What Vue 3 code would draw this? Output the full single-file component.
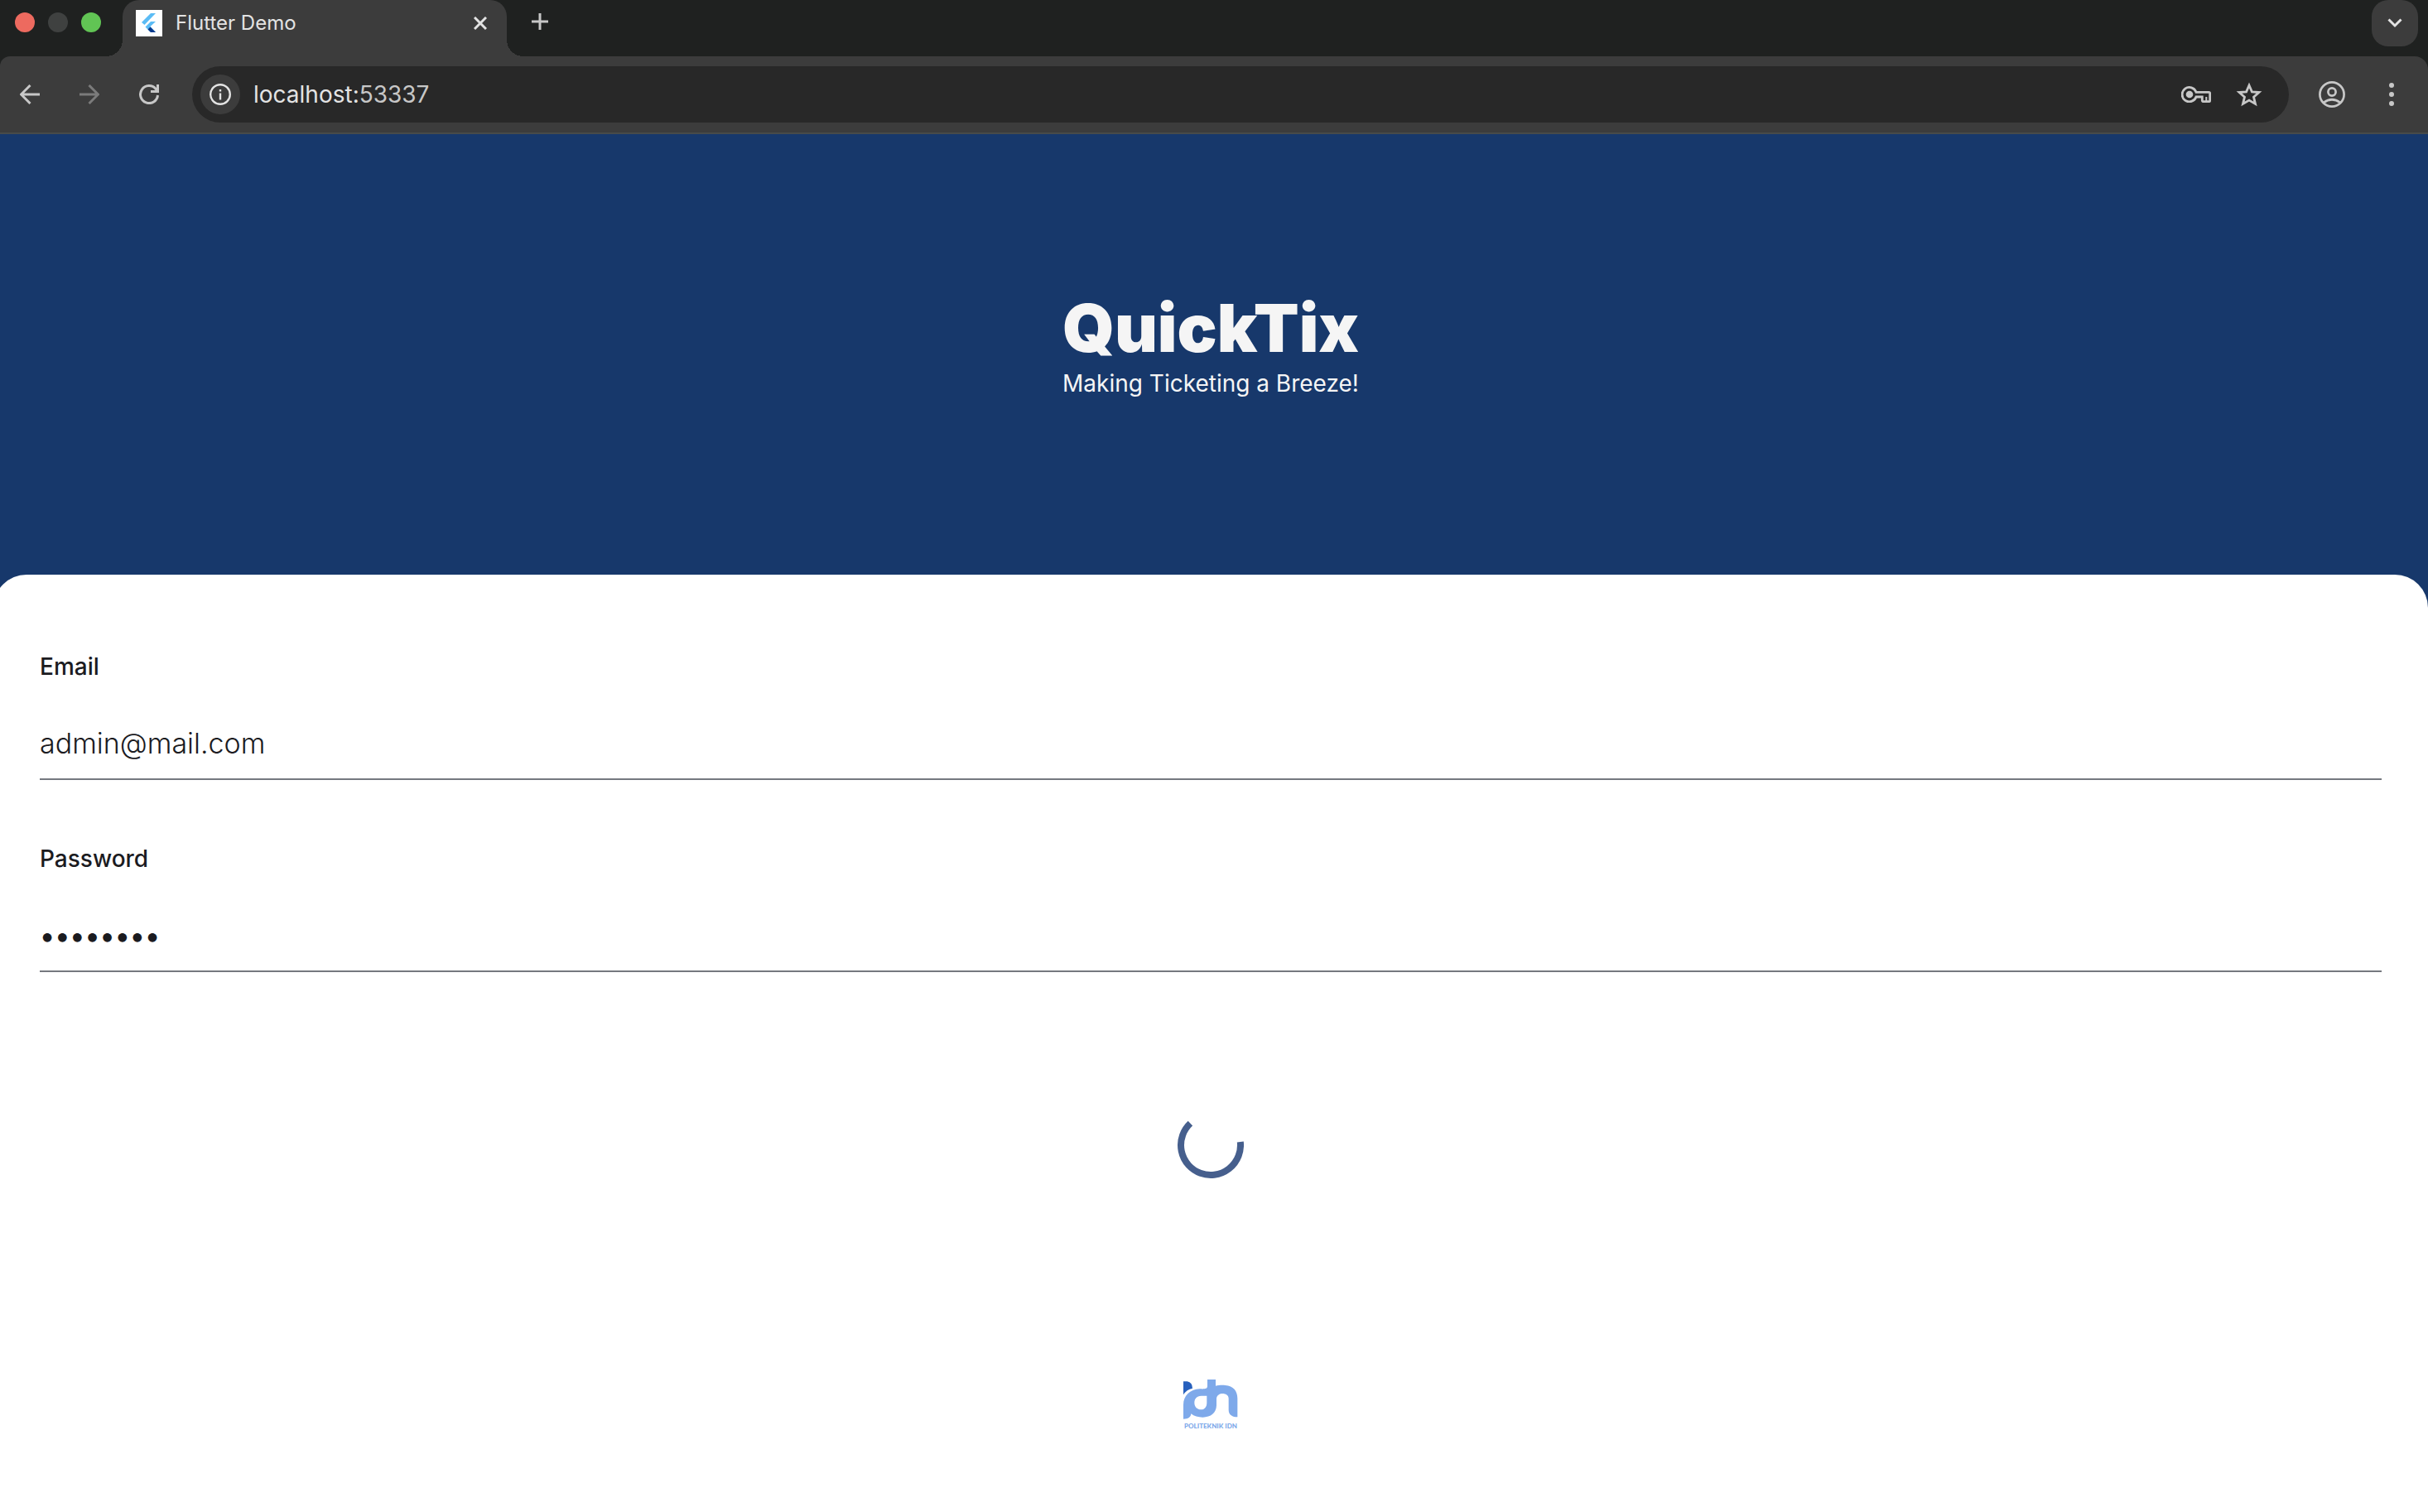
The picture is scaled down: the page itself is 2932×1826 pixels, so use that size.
<script setup>
import { ref } from 'vue'

const email = ref('admin@mail.com')
const password = ref('password')
</script>

<template>
  <div class="browser">
    <header class="chrome">
      <div class="tabstrip">
        <div class="lights">
          <button class="light close" aria-label="Close window"></button>
          <button class="light minimise" aria-label="Minimise window"></button>
          <button class="light zoom" aria-label="Zoom window"></button>
        </div>
        <div class="tab">
          <svg class="favicon" viewBox="0 0 32 32" aria-hidden="true">
            <rect width="32" height="32" fill="#fff" />
            <path d="M18 4H24L10.500 18L7 15Z" fill="#5bbcf5" />
            <path d="M18 14H24L17.500 20L24 27H18L11.500 20.500Z" fill="#5bbcf5" />
            <path d="M14.500 23.500L17.500 20.500L24 27H18Z" fill="#0a3a8c" />
          </svg>
          <span class="tab-title">Flutter Demo</span>
          <button class="icon-button tab-close" aria-label="Close tab">
            <svg width="16" height="16" viewBox="0 0 16 16"><path d="M1 1L15 15M15 1L1 15" stroke="#e3e3e3" stroke-width="3" /></svg>
          </button>
        </div>
        <button class="icon-button new-tab" aria-label="New tab">
          <svg width="20" height="20" viewBox="0 0 20 20"><path d="M10 0V20M0 10H20" stroke="#c7c7c7" stroke-width="3" /></svg>
        </button>
        <button class="icon-button tab-search" aria-label="Search tabs">
          <svg width="18" height="12" viewBox="0 0 18 12"><path d="M1.500 1.500L9 9L16.500 1.500" fill="none" stroke="#e3e3e3" stroke-width="3" /></svg>
        </button>
      </div>

      <nav class="toolbar" aria-label="Browser">
        <button class="icon-button nav" aria-label="Back">
          <svg width="24" height="24" viewBox="0 0 24 24"><path d="M24 12H2M12.500 1L1.500 12L12.500 23" fill="none" stroke="#c7c7c7" stroke-width="3" /></svg>
        </button>
        <button class="icon-button nav" aria-label="Forward" disabled>
          <svg width="24" height="24" viewBox="0 0 24 24"><path d="M0 12H22M11.500 1L22.500 12L11.500 23" fill="none" stroke="#7b7b7b" stroke-width="3" /></svg>
        </button>
        <button class="icon-button nav" aria-label="Reload">
          <svg width="24" height="24" viewBox="0 0 24 24"><path d="M22.500 13A10.500 10.500 0 1 1 20 5.200L21.500 7" fill="none" stroke="#c7c7c7" stroke-width="3" /><path d="M24 0V10H14V7H21V0Z" fill="#c7c7c7" /></svg>
        </button>
        <div class="omnibox">
          <button class="icon-button site-info" aria-label="Site information">
            <svg width="26" height="26" viewBox="0 0 26 26"><circle cx="13" cy="13" r="11.800" fill="none" stroke="#e3e3e3" stroke-width="2.400" /><path d="M11.800 11.500H14.200V19.500H11.800ZM11.800 7H14.200V9.500H11.800Z" fill="#e3e3e3" /></svg>
          </button>
          <span class="url">localhost:<span class="port">53337</span></span>
          <button class="icon-button key" aria-label="Passwords">
            <svg width="36" height="20" viewBox="0 0 36 20"><g fill="none" stroke="#c7c7c7" stroke-width="2.800"><path d="M18 7.300A8.700 8.700 0 1 0 18 13H25.300V17.300Q25.300 18.700 26.700 18.700H33.300Q34.700 18.700 34.700 17.300V8.700Q34.700 7.300 33.300 7.300Z" /><path d="M30.300 13V18" stroke-width="2" /></g><circle cx="10" cy="10" r="4.300" fill="#c7c7c7" /></svg>
          </button>
          <button class="icon-button star" aria-label="Bookmark this tab">
            <svg width="32" height="30" viewBox="0 0 32 30"><path d="M16 4L19.400 11.800L28 12.500L21.500 18.200L23.500 26.500L16 22.100L8.500 26.500L10.500 18.200L4 12.500L12.600 11.800Z" fill="none" stroke="#c7c7c7" stroke-width="2.800" /></svg>
          </button>
        </div>
        <button class="icon-button account" aria-label="Profile">
          <svg width="32" height="32" viewBox="0 0 32 32"><g fill="none" stroke="#c7c7c7" stroke-width="2.700"><circle cx="16" cy="16" r="14.600" /><circle cx="16" cy="13" r="4.600" /><path d="M6 26Q16 18.500 26 26" /></g></svg>
        </button>
        <button class="icon-button menu" aria-label="Menu">
          <svg width="6" height="28" viewBox="0 0 6 28"><g fill="#c7c7c7"><circle cx="3" cy="3" r="3" /><circle cx="3" cy="14" r="3" /><circle cx="3" cy="25" r="3" /></g></svg>
        </button>
      </nav>
    </header>

    <main class="page">
      <section class="hero">
        <h1 class="brand">QuickTix</h1>
        <p class="tagline">Making Ticketing a Breeze!</p>
      </section>

      <form class="sheet" @submit.prevent>
        <div class="field">
          <label for="email">Email</label>
          <input id="email" v-model="email" type="text" autocomplete="off" />
        </div>
        <div class="field">
          <label for="password">Password</label>
          <input id="password" v-model="password" type="password" autocomplete="off" />
        </div>

        <svg class="spinner" width="80" height="80" viewBox="0 0 80 80" role="img" aria-label="Loading">
          <path d="M75.800 36A36 36 0 1 1 15.400 13.700" fill="none" stroke="#465f8d" stroke-width="8" />
        </svg>

        <footer class="campus">
          <svg width="66" height="48" viewBox="58 44 198 144" aria-hidden="true">
            <path d="M58 51H72Q91 55 91 76Q70 80 58 99Z" fill="#2760bd" />
            <path fill-rule="evenodd" fill="#7ea9ea" d="M58 187V136C58 103 82 80 117 78C131 78 145 80 145 68V44H175V67C184 65 197 64 210 65C239 67 254 86 254 112V180C236 180 222 172 222 154V113C222 91 181 88 178 113V138C177 165 158 181 128 181C111 181 97 177 86 168C85 180 76 187 58 187ZM143 103H123C106 103 98 114 98 128C98 144 109 153 122 153C137 153 143 141 143 128Z" />
          </svg>
          <span>POLITEKNIK IDN</span>
        </footer>
      </form>
    </main>
  </div>
</template>

<style>
body {
  margin: 0;
}
</style>

<style scoped>
.browser {
  display: flex;
  flex-direction: column;
  min-height: 100vh;
  overflow: hidden;
  background: #17386b;
  font-family: Inter, sans-serif;
}

.browser *,
.browser *::before,
.browser *::after {
  box-sizing: border-box;
}

.icon-button {
  display: flex;
  flex: none;
  align-items: center;
  justify-content: center;
  padding: 0;
  border: 0;
  background: none;
}

.chrome {
  background: #1f2120;
}

.tabstrip {
  display: flex;
  align-items: flex-start;
  height: 68px;
  padding: 0 12px 0 18px;
}

.lights {
  display: flex;
  gap: 16px;
  padding-top: 15px;
}

.light {
  width: 24px;
  height: 24px;
  padding: 0;
  border: 0;
  border-radius: 50%;
}

.close {
  background: #ed6a5f;
}

.minimise {
  background: #3f4140;
}

.zoom {
  background: #61c454;
}

.tab {
  position: relative;
  display: flex;
  align-items: center;
  width: 464px;
  height: 68px;
  margin-left: 26px;
  padding: 0 24px 12px 16px;
  border-radius: 20px 20px 0 0;
  background: #3c3c3c;
}

.tab::before,
.tab::after {
  content: '';
  position: absolute;
  bottom: 0;
  width: 20px;
  height: 20px;
}

.tab::before {
  right: 100%;
  background: radial-gradient(circle at 0 0, transparent 20px, #3c3c3c 20px);
}

.tab::after {
  left: 100%;
  background: radial-gradient(circle at 100% 0, transparent 20px, #3c3c3c 20px);
}

.favicon {
  width: 32px;
  height: 32px;
}

.tab-title {
  flex: 1;
  margin-left: 16px;
  color: #e3e3e3;
  font-size: 24px;
  line-height: 32px;
}

.new-tab {
  width: 40px;
  height: 52px;
  margin-left: 20px;
}

.tab-search {
  width: 56px;
  height: 56px;
  margin-left: auto;
  border-radius: 20px;
  background: #3c3c3c;
}

.toolbar {
  display: flex;
  align-items: center;
  height: 94px;
  padding: 0 32px 0 0;
  border-bottom: 2px solid #474b4a;
  border-radius: 12px 16px 0 0;
  background: #3c3c3c;
}

.nav {
  width: 72px;
  height: 72px;
}

.omnibox {
  display: flex;
  flex: 1;
  align-items: center;
  height: 68px;
  margin-left: 16px;
  padding: 0 32px 0 10px;
  border-radius: 34px;
  background: #282828;
}

.site-info {
  width: 48px;
  height: 48px;
  border-radius: 50%;
  background: #3c3c3c;
}

.url {
  flex: 1;
  margin-left: 16px;
  color: #e3e3e3;
  font-size: 28px;
  line-height: 36px;
}

.port {
  color: #c7c7c7;
}

.star {
  margin-left: 30px;
}

.account {
  margin-left: 36px;
}

.menu {
  width: 24px;
  margin-left: 44px;
}

.page {
  display: flex;
  flex: 1;
  flex-direction: column;
  margin-left: -8px;
}

.hero {
  padding: 187px 0 211px;
  color: #f5f5f5;
  text-align: center;
}

.brand {
  margin: 0;
  font-size: 80px;
  font-weight: 900;
  line-height: 94px;
}

.tagline {
  margin: 0;
  font-size: 28px;
  line-height: 40px;
}

.sheet {
  display: flex;
  flex: 1;
  flex-direction: column;
  padding: 93px 56px 0;
  border-radius: 40px 40px 0 0;
  background: #fff;
}

.field {
  display: flex;
  flex-direction: column;
  height: 232px;
}

.field label {
  color: #1b1b1f;
  font-size: 28px;
  font-weight: 500;
  line-height: 36px;
}

.field input {
  width: 100%;
  height: 88px;
  margin-top: 31px;
  padding: 0;
  border: 0;
  border-bottom: 2px solid #75787f;
  outline: 0;
  background: transparent;
  color: #1b1b1f;
  font-family: Inter, sans-serif;
  font-size: 34px;
  font-weight: 300;
}

.field input[type='password'] {
  font-weight: 500;
}

.spinner {
  align-self: center;
  margin-top: 92px;
}

.campus {
  display: flex;
  flex-direction: column;
  align-items: center;
  margin-top: 243px;
}

.campus span {
  color: #7ea9ea;
  font-family: Lato, sans-serif;
  font-size: 8px;
  font-weight: 900;
  line-height: 16px;
}
</style>
